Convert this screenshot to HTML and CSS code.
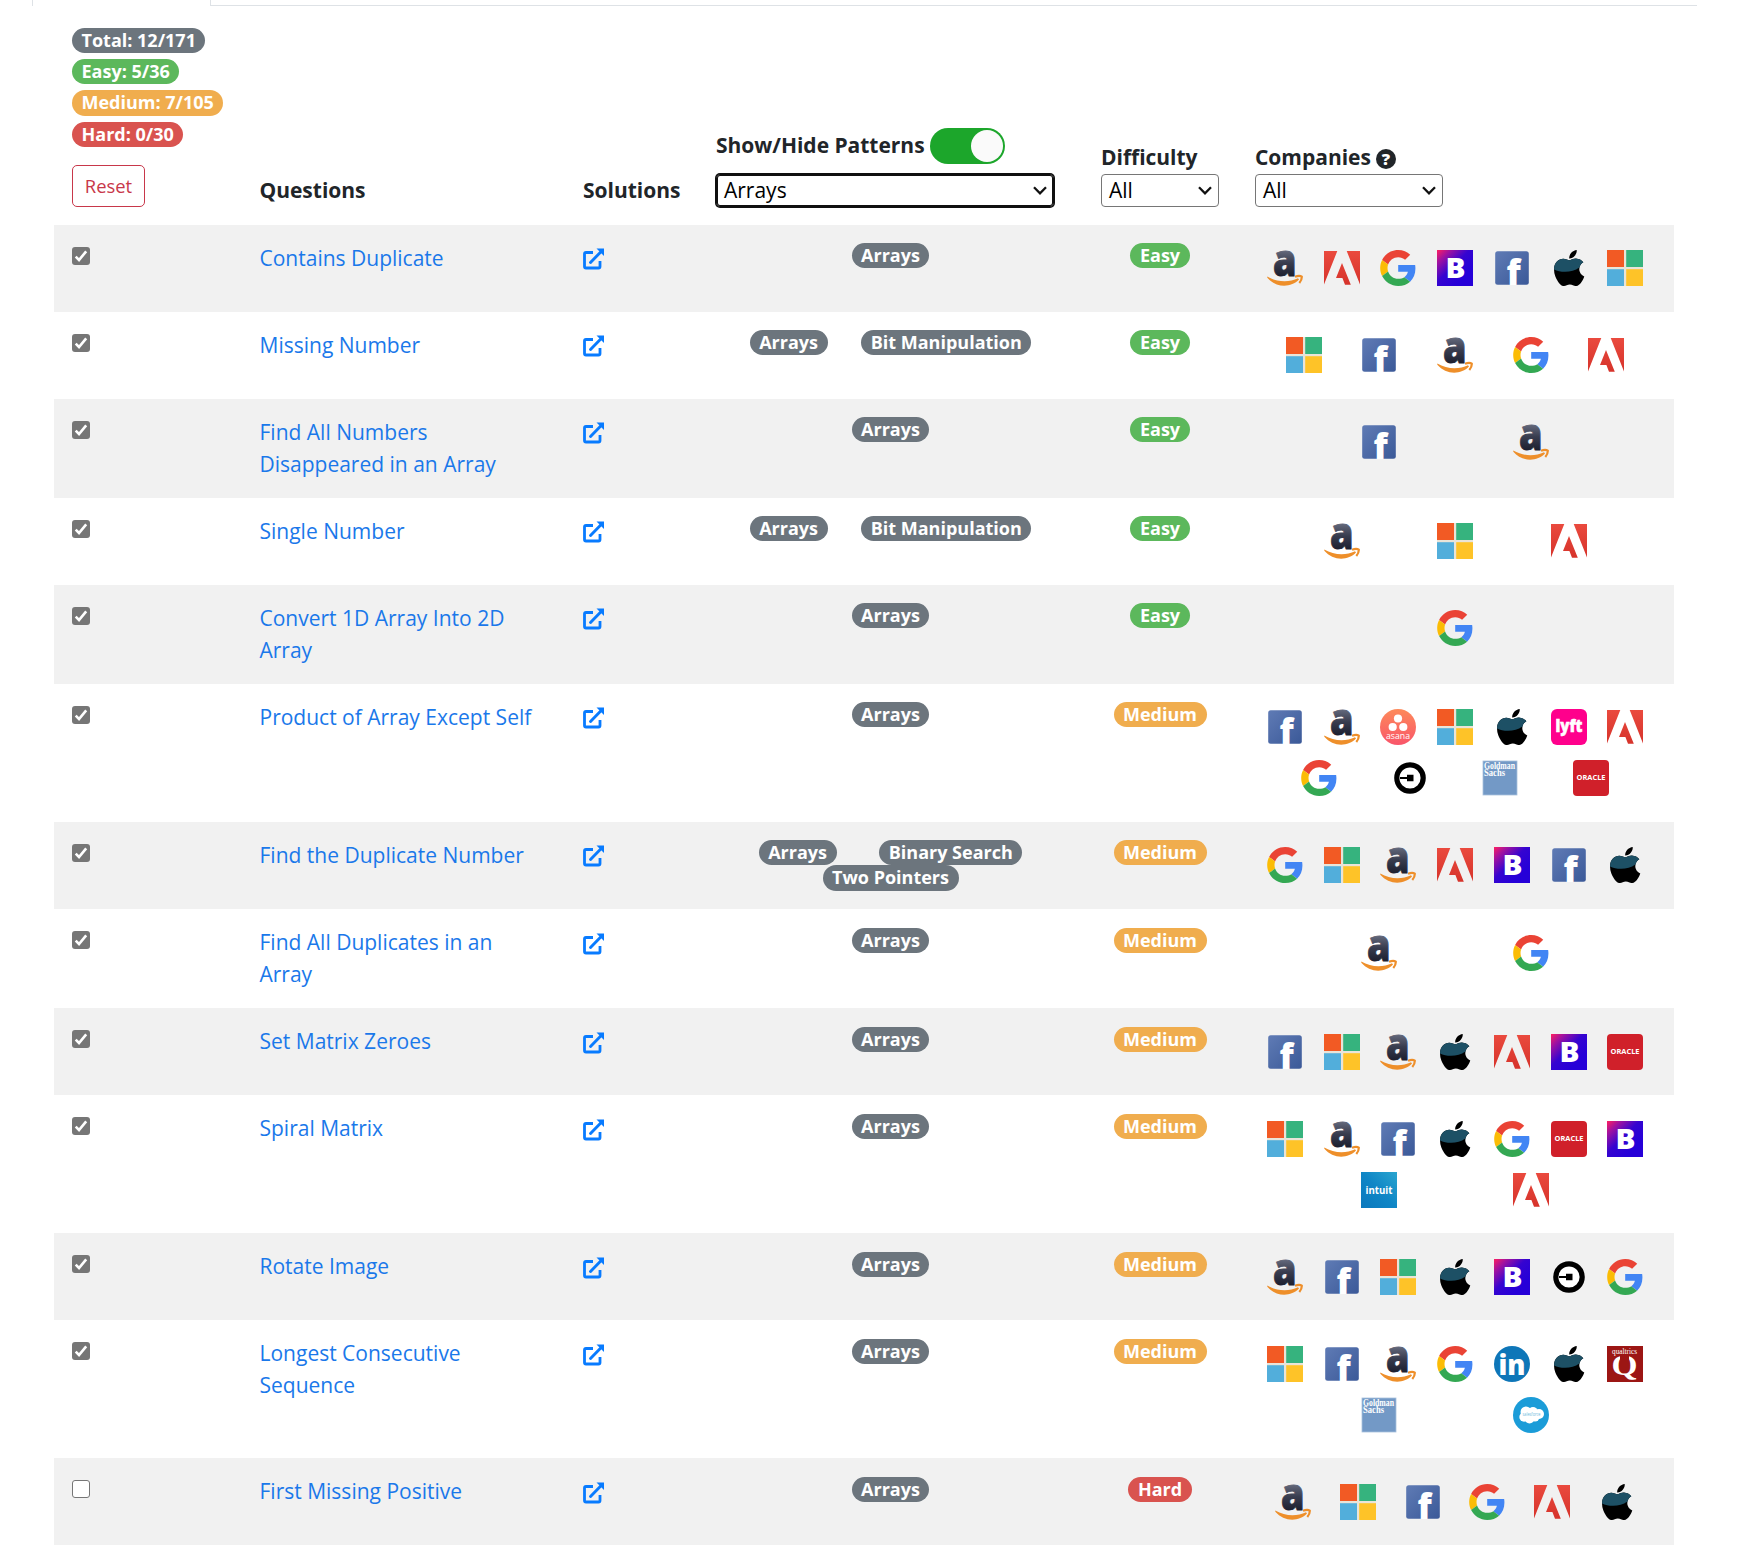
FILE: index.html
```html
<!DOCTYPE html>
<html lang="en">
<head>
<meta charset="utf-8">
<title>Questions</title>
<link rel="stylesheet" href="styles.css">
</head>
<body>
<svg class="gradients" aria-hidden="true">
<defs>
<linearGradient id="g-boot" x1="0" y1="0" x2="0.75" y2="0.75"><stop offset="0" stop-color="#ff1f5f"/><stop offset=".25" stop-color="#a012a0"/><stop offset=".6" stop-color="#3504d0"/><stop offset="1" stop-color="#2600d8"/></linearGradient>
<linearGradient id="g-asana" x1="0" y1="0" x2="0" y2="1"><stop offset="0" stop-color="#fd8a5a"/><stop offset="1" stop-color="#f9556a"/></linearGradient>
<linearGradient id="g-intuit" x1="1" y1="0" x2="0" y2="1"><stop offset="0" stop-color="#2aa5cf"/><stop offset=".5" stop-color="#0f86c6"/><stop offset="1" stop-color="#0b78bd"/></linearGradient>
<linearGradient id="g-fb" x1="0" y1="0" x2="1" y2="1"><stop offset="0" stop-color="#5f7bb5"/><stop offset="1" stop-color="#3b5998"/></linearGradient>
<linearGradient id="g-ama" gradientUnits="userSpaceOnUse" x1="0" y1="0" x2="0" y2="26"><stop offset="0" stop-color="#666b7e"/><stop offset=".5" stop-color="#383c4e"/><stop offset="1" stop-color="#1d2030"/></linearGradient>
<linearGradient id="g-adobe" x1="0" y1="0" x2="0" y2="1"><stop offset="0" stop-color="#ea4a3e"/><stop offset="1" stop-color="#d6332b"/></linearGradient>
</defs>
</svg>
<svg class="sprite" aria-hidden="true">
<symbol id="amazon" viewBox="0 0 36 36"><text x="6" y="25.500" font-family="Open Sans" font-weight="800" font-size="45" textLength="23.500" lengthAdjust="spacingAndGlyphs" fill="url(#g-ama)" stroke="url(#g-ama)" stroke-width=".9">a</text><path d="M.3 26.500C10 32.300 22 32.500 31 28.300L32 29.500C24 38 9 38 .3 27.800Z" fill="#ee8f2a"/><path d="M28 26.700Q32.500 25 34.800 26.600Q35 30 32.300 33" fill="none" stroke="#ee8f2a" stroke-width="2.200" stroke-linejoin="round"/></symbol>
<symbol id="adobe" viewBox="0 0 36 36"><path fill="url(#g-adobe)" d="M0 1H13.300L0 34.500ZM22.700 1H36V34.500ZM18 13L26.800 34.800H21L18.400 28H12Z"/></symbol>
<symbol id="google" viewBox="0 0 47.500 48"><path fill="#EA4335" d="M24 9.500c3.540 0 6.710 1.220 9.210 3.600l6.850-6.850C35.900 2.380 30.470 0 24 0 14.620 0 6.510 5.380 2.560 13.220l7.980 6.190C12.430 13.720 17.740 9.500 24 9.500z"/><path fill="#4285F4" d="M46.980 24.550c0-1.570-.15-3.090-.38-4.550H24v9.020h12.940c-.58 2.960-2.260 5.480-4.780 7.180l7.730 6c4.510-4.180 7.090-10.360 7.090-17.650z"/><path fill="#FBBC05" d="M10.530 28.590c-.48-1.450-.76-2.990-.76-4.590s.27-3.140.76-4.590l-7.980-6.190C.92 16.460 0 20.120 0 24c0 3.880.92 7.540 2.560 10.780l7.970-6.190z"/><path fill="#34A853" d="M24 48c6.480 0 11.930-2.130 15.890-5.810l-7.730-6c-2.150 1.450-4.920 2.300-8.160 2.300-6.260 0-11.570-4.220-13.470-9.910l-7.980 6.190C6.510 42.620 14.620 48 24 48z"/></symbol>
<symbol id="boot" viewBox="0 0 36 36"><rect width="36" height="36" fill="url(#g-boot)"/><text x="18.500" y="27.800" text-anchor="middle" font-family="Open Sans" font-weight="800" font-size="28" textLength="20" lengthAdjust="spacingAndGlyphs" fill="#fff">B</text></symbol>
<symbol id="facebook" viewBox="0 0 36 36"><rect x="1.200" y="1.200" width="33.600" height="33.600" rx="2.500" fill="url(#g-fb)"/><text x="12.500" y="35" font-family="Open Sans" font-weight="800" font-size="34.500" fill="#fff">f</text></symbol>
<symbol id="apple" viewBox="0 0 36 36"><g transform="translate(2.700 -2.570) scale(.0804)"><path d="M318.700 268.700c-.2-36.700 16.400-64.400 50-84.800-18.800-26.900-47.200-41.700-84.700-44.600-35.500-2.800-74.300 20.700-88.500 20.700-15 0-49.400-19.700-76.400-19.700C63.300 141.200 4 184.800 4 273.500q0 39.300 14.400 81.200c12.800 36.700 59 126.700 107.200 125.200 25.200-.6 43-17.900 75.800-17.900 31.800 0 48.300 17.900 76.400 17.900 48.600-.7 90.400-82.500 102.600-119.300-65.200-30.700-61.700-90-61.700-91.900zm-56.600-164.200c27.300-32.400 24.800-61.900 24-72.500-24.100 1.400-52 16.400-67.900 34.900-17.500 19.800-27.800 44.300-25.600 71.900 26.100 2 49.900-11.400 69.500-34.300z"/><path fill="#1d5065" d="M318.700 268.700c-.2-36.700 16.400-64.400 50-84.800-18.800-26.900-47.200-41.700-84.700-44.600-35.500-2.800-74.300 20.700-88.500 20.700-15 0-49.400-19.700-76.400-19.700C63.300 141.200 4 184.800 4 273.500C80 315 230 320 318.700 250z"/></g></symbol>
<symbol id="microsoft" viewBox="0 0 36 36"><path fill="#e9e4d8" d="M0 0H36V36H0Z"/><path fill="#f25a24" d="M0 0H17V17H0Z"/><path fill="#36b37e" d="M19.200 0H36V17H19.200Z"/><path fill="#52aedb" d="M0 19.200H17V36H0Z"/><path fill="#fec328" d="M19.200 19.200H36V36H19.200Z"/></symbol>
<symbol id="asana" viewBox="0 0 36 36"><circle cx="18" cy="18" r="18" fill="url(#g-asana)"/><g fill="#fff"><circle cx="18" cy="9.500" r="4.100"/><circle cx="12.700" cy="18" r="4.100"/><circle cx="23.300" cy="18" r="4.100"/><text x="18" y="29.500" text-anchor="middle" font-family="Open Sans" font-size="9" textLength="24" lengthAdjust="spacingAndGlyphs">asana</text></g></symbol>
<symbol id="lyft" viewBox="0 0 36 36"><rect width="36" height="36" rx="6" fill="#ff008c"/><text x="18" y="22.500" text-anchor="middle" font-family="Open Sans" font-weight="800" font-size="18" textLength="27" lengthAdjust="spacingAndGlyphs" fill="#fff" stroke="#fff" stroke-width=".6">lyft</text></symbol>
<symbol id="uber" viewBox="0 0 36 36"><circle cx="18" cy="18" r="13.200" fill="#fff" stroke="#000" stroke-width="5.200"/><path d="M8 17.100H15V14.700H21.500V21.300H15V18.900H8Z"/></symbol>
<symbol id="goldman" viewBox="0 0 36 36"><rect x="1" y="1" width="34" height="34" fill="#7399c6" stroke="#a9c1dd" stroke-width=".8"/><g font-family="Liberation Serif" font-weight="700" font-size="9.500" fill="#fff"><text x="2" y="9" textLength="31" lengthAdjust="spacingAndGlyphs">Goldman</text><text x="2" y="15.600" textLength="21" lengthAdjust="spacingAndGlyphs">Sachs</text></g></symbol>
<symbol id="oracle" viewBox="0 0 36 36"><rect width="36" height="36" rx="4" fill="#d0202a"/><text x="18" y="19.800" text-anchor="middle" font-family="Open Sans" font-weight="700" font-size="7" textLength="29" lengthAdjust="spacingAndGlyphs" fill="#fff">ORACLE</text></symbol>
<symbol id="intuit" viewBox="0 0 36 36"><rect width="36" height="36" fill="url(#g-intuit)"/><text x="18" y="21.500" text-anchor="middle" font-family="Open Sans" font-weight="700" font-size="10" textLength="27" lengthAdjust="spacingAndGlyphs" fill="#fff">intuit</text></symbol>
<symbol id="linkedin" viewBox="0 0 36 36"><circle cx="18" cy="18" r="18" fill="#0e76b8"/><text x="18" y="29" text-anchor="middle" font-family="Open Sans" font-weight="800" font-size="28" textLength="27" lengthAdjust="spacingAndGlyphs" fill="#fff">in</text></symbol>
<symbol id="qualtrics" viewBox="0 0 36 36"><rect width="36" height="36" fill="#9c1614"/><g fill="#fff" text-anchor="middle"><text x="17.500" y="7.500" font-family="Liberation Serif" font-size="8.500" textLength="25" lengthAdjust="spacingAndGlyphs">qualtrics</text><text x="17.500" y="28.500" font-family="Liberation Serif" font-weight="700" font-size="29" textLength="26" lengthAdjust="spacingAndGlyphs">Q</text></g><path fill="#9c1614" d="M13 8.300H22V14H13Z"/></symbol>
<symbol id="salesforce" viewBox="0 0 36 36"><circle cx="18" cy="18" r="18" fill="#1b9cd8"/><g fill="#fff"><circle cx="13" cy="15" r="5.500"/><circle cx="20" cy="14.500" r="4.600"/><circle cx="26" cy="17" r="5"/><circle cx="11" cy="20" r="4.700"/><circle cx="16.500" cy="21.500" r="5"/><circle cx="22" cy="20" r="4.500"/></g><text x="18.500" y="19.300" text-anchor="middle" font-family="Open Sans" font-size="4.500" textLength="18" lengthAdjust="spacingAndGlyphs" fill="#6bb9dd">salesforce</text></symbol>
<symbol id="ext" viewBox="0 0 21 22"><path d="M10 4.500H3Q1.500 4.500 1.500 6V18.500Q1.500 20 3 20H15.500Q17 20 17 18.500V13" fill="none" stroke="currentColor" stroke-width="2.800"/><path d="M7.500 14.500L17.500 4.200" stroke="currentColor" stroke-width="2.900" stroke-linecap="round"/><path d="M13.500 .5H21V8Z" fill="currentColor"/></symbol>
<symbol id="tick" viewBox="0 0 18 18"><path d="M3.700 9.700L7 13L14.200 4.300" fill="none" stroke="#fff" stroke-width="2.600"/></symbol>
<symbol id="chev" viewBox="0 0 14 9"><path d="M1 1.300L7 7.300L13 1.300" fill="none" stroke="#111" stroke-width="2.300"/></symbol>
</svg>

<div class="tabs"><div class="tab-active"></div><div class="tab-line"></div></div>

<table class="questions">
<colgroup><col class="c1"><col class="c2"><col class="c3"><col class="c4"><col class="c5"><col class="c6"></colgroup>
<thead><tr>
<th><div class="totals"><span class="badge gray">Total: 12/171</span><span class="badge green">Easy: 5/36</span><span class="badge orange">Medium: 7/105</span><span class="badge red">Hard: 0/30</span></div><button class="reset">Reset</button></th>
<th><div class="label">Questions</div></th>
<th><div class="label">Solutions</div></th>
<th><div class="toggle-row">Show/Hide Patterns<span class="switch"><span class="thumb"></span></span></div><div class="select wide focused">Arrays<svg><use href="#chev"/></svg></div></th>
<th><div class="label">Difficulty</div><div class="select small">All<svg><use href="#chev"/></svg></div></th>
<th><div class="label company-head">Companies<span class="help">?</span></div><div class="select mid">All<svg><use href="#chev"/></svg></div></th>
</tr></thead>
<tbody>
<tr><td><span class="check on"><svg><use href="#tick"/></svg></span></td><td><a>Contains Duplicate</a></td><td><svg class="ext"><use href="#ext"/></svg></td><td><div class="tags"><span class="badge gray">Arrays</span></div></td><td><div class="tags"><span class="badge green">Easy</span></div></td>
<td><div class="logos"><svg><use href="#amazon"/></svg><svg><use href="#adobe"/></svg><svg><use href="#google"/></svg><svg><use href="#boot"/></svg><svg><use href="#facebook"/></svg><svg><use href="#apple"/></svg><svg><use href="#microsoft"/></svg></div></td></tr>
<tr><td><span class="check on"><svg><use href="#tick"/></svg></span></td><td><a>Missing Number</a></td><td><svg class="ext"><use href="#ext"/></svg></td><td><div class="tags"><span class="badge gray">Arrays</span><span class="badge gray">Bit Manipulation</span></div></td><td><div class="tags"><span class="badge green">Easy</span></div></td>
<td><div class="logos"><svg><use href="#microsoft"/></svg><svg><use href="#facebook"/></svg><svg><use href="#amazon"/></svg><svg><use href="#google"/></svg><svg><use href="#adobe"/></svg></div></td></tr>
<tr><td><span class="check on"><svg><use href="#tick"/></svg></span></td><td><a>Find All Numbers Disappeared in an Array</a></td><td><svg class="ext"><use href="#ext"/></svg></td><td><div class="tags"><span class="badge gray">Arrays</span></div></td><td><div class="tags"><span class="badge green">Easy</span></div></td>
<td><div class="logos"><svg><use href="#facebook"/></svg><svg><use href="#amazon"/></svg></div></td></tr>
<tr><td><span class="check on"><svg><use href="#tick"/></svg></span></td><td><a>Single Number</a></td><td><svg class="ext"><use href="#ext"/></svg></td><td><div class="tags"><span class="badge gray">Arrays</span><span class="badge gray">Bit Manipulation</span></div></td><td><div class="tags"><span class="badge green">Easy</span></div></td>
<td><div class="logos"><svg><use href="#amazon"/></svg><svg><use href="#microsoft"/></svg><svg><use href="#adobe"/></svg></div></td></tr>
<tr><td><span class="check on"><svg><use href="#tick"/></svg></span></td><td><a>Convert 1D Array Into 2D Array</a></td><td><svg class="ext"><use href="#ext"/></svg></td><td><div class="tags"><span class="badge gray">Arrays</span></div></td><td><div class="tags"><span class="badge green">Easy</span></div></td>
<td><div class="logos"><svg><use href="#google"/></svg></div></td></tr>
<tr><td><span class="check on"><svg><use href="#tick"/></svg></span></td><td><a>Product of Array Except Self</a></td><td><svg class="ext"><use href="#ext"/></svg></td><td><div class="tags"><span class="badge gray">Arrays</span></div></td><td><div class="tags"><span class="badge orange">Medium</span></div></td>
<td><div class="logos"><svg><use href="#facebook"/></svg><svg><use href="#amazon"/></svg><svg><use href="#asana"/></svg><svg><use href="#microsoft"/></svg><svg><use href="#apple"/></svg><svg><use href="#lyft"/></svg><svg><use href="#adobe"/></svg><svg><use href="#google"/></svg><svg><use href="#uber"/></svg><svg><use href="#goldman"/></svg><svg><use href="#oracle"/></svg></div></td></tr>
<tr><td><span class="check on"><svg><use href="#tick"/></svg></span></td><td><a>Find the Duplicate Number</a></td><td><svg class="ext"><use href="#ext"/></svg></td><td><div class="tags"><span class="badge gray">Arrays</span><span class="badge gray">Binary Search</span><span class="badge gray">Two Pointers</span></div></td><td><div class="tags"><span class="badge orange">Medium</span></div></td>
<td><div class="logos"><svg><use href="#google"/></svg><svg><use href="#microsoft"/></svg><svg><use href="#amazon"/></svg><svg><use href="#adobe"/></svg><svg><use href="#boot"/></svg><svg><use href="#facebook"/></svg><svg><use href="#apple"/></svg></div></td></tr>
<tr><td><span class="check on"><svg><use href="#tick"/></svg></span></td><td><a>Find All Duplicates in an Array</a></td><td><svg class="ext"><use href="#ext"/></svg></td><td><div class="tags"><span class="badge gray">Arrays</span></div></td><td><div class="tags"><span class="badge orange">Medium</span></div></td>
<td><div class="logos"><svg><use href="#amazon"/></svg><svg><use href="#google"/></svg></div></td></tr>
<tr><td><span class="check on"><svg><use href="#tick"/></svg></span></td><td><a>Set Matrix Zeroes</a></td><td><svg class="ext"><use href="#ext"/></svg></td><td><div class="tags"><span class="badge gray">Arrays</span></div></td><td><div class="tags"><span class="badge orange">Medium</span></div></td>
<td><div class="logos"><svg><use href="#facebook"/></svg><svg><use href="#microsoft"/></svg><svg><use href="#amazon"/></svg><svg><use href="#apple"/></svg><svg><use href="#adobe"/></svg><svg><use href="#boot"/></svg><svg><use href="#oracle"/></svg></div></td></tr>
<tr><td><span class="check on"><svg><use href="#tick"/></svg></span></td><td><a>Spiral Matrix</a></td><td><svg class="ext"><use href="#ext"/></svg></td><td><div class="tags"><span class="badge gray">Arrays</span></div></td><td><div class="tags"><span class="badge orange">Medium</span></div></td>
<td><div class="logos"><svg><use href="#microsoft"/></svg><svg><use href="#amazon"/></svg><svg><use href="#facebook"/></svg><svg><use href="#apple"/></svg><svg><use href="#google"/></svg><svg><use href="#oracle"/></svg><svg><use href="#boot"/></svg><svg><use href="#intuit"/></svg><svg><use href="#adobe"/></svg></div></td></tr>
<tr><td><span class="check on"><svg><use href="#tick"/></svg></span></td><td><a>Rotate Image</a></td><td><svg class="ext"><use href="#ext"/></svg></td><td><div class="tags"><span class="badge gray">Arrays</span></div></td><td><div class="tags"><span class="badge orange">Medium</span></div></td>
<td><div class="logos"><svg><use href="#amazon"/></svg><svg><use href="#facebook"/></svg><svg><use href="#microsoft"/></svg><svg><use href="#apple"/></svg><svg><use href="#boot"/></svg><svg><use href="#uber"/></svg><svg><use href="#google"/></svg></div></td></tr>
<tr><td><span class="check on"><svg><use href="#tick"/></svg></span></td><td><a>Longest Consecutive Sequence</a></td><td><svg class="ext"><use href="#ext"/></svg></td><td><div class="tags"><span class="badge gray">Arrays</span></div></td><td><div class="tags"><span class="badge orange">Medium</span></div></td>
<td><div class="logos"><svg><use href="#microsoft"/></svg><svg><use href="#facebook"/></svg><svg><use href="#amazon"/></svg><svg><use href="#google"/></svg><svg><use href="#linkedin"/></svg><svg><use href="#apple"/></svg><svg><use href="#qualtrics"/></svg><svg><use href="#goldman"/></svg><svg><use href="#salesforce"/></svg></div></td></tr>
<tr><td><span class="check"></span></td><td><a>First Missing Positive</a></td><td><svg class="ext"><use href="#ext"/></svg></td><td><div class="tags"><span class="badge gray">Arrays</span></div></td><td><div class="tags"><span class="badge red">Hard</span></div></td>
<td><div class="logos"><svg><use href="#amazon"/></svg><svg><use href="#microsoft"/></svg><svg><use href="#facebook"/></svg><svg><use href="#google"/></svg><svg><use href="#adobe"/></svg><svg><use href="#apple"/></svg></div></td></tr>
</tbody>
</table>
</body>
</html>
```
FILE: styles.css
```css
* { box-sizing: border-box; }
body {
  margin: 0;
  background: #fff;
  color: #212529;
  font: 400 21px/31.5px "Open Sans", "Noto Sans", sans-serif;
}
.gradients { display: block; width: 0; height: 0; }
.sprite { display: none; }

.tabs { display: flex; height: 6px; margin: 0 56px 0 32px; }
.tab-active { width: 179px; border: solid #dee2e6; border-width: 0 1px; }
.tab-line { flex: 1; border-bottom: 1px solid #dee2e6; }

.questions {
  width: 1620px;
  margin-left: 54px;
  table-layout: fixed;
  border-collapse: collapse;
}
.c1 { width: 187.5px; }
.c2 { width: 323.5px; }
.c3 { width: 133px; }
.c4 { width: 385px; }
.c5 { width: 154px; }
.c6 { width: 437px; }

th { height: 219px; padding: 18px; vertical-align: bottom; text-align: left; font-weight: 700; letter-spacing: -.02px; }
td { padding: 18px; vertical-align: top; }
tbody tr:nth-child(odd) { background: #f1f1f1; }
tbody tr:nth-child(n+8) td:nth-child(n+3) { padding-top: 19px; padding-bottom: 17px; }

.totals { display: flex; flex-direction: column; align-items: flex-start; gap: 6px; margin-bottom: 18px; letter-spacing: 0; }
.badge {
  height: 25.33px;
  padding: 0 9.5px;
  border-radius: 13px;
  color: #fff;
  font-size: 18px;
  font-weight: 700;
  line-height: 25.33px;
  white-space: nowrap;
}
.gray { background: #6c757d; }
.green { background: #5cb85c; }
.orange { background: #f0ad4e; }
.red { background: #d9534f; }

.reset {
  display: block;
  width: 73px;
  height: 42px;
  padding: 0;
  border: 1px solid #c8374a;
  border-radius: 5px;
  background: #fff;
  color: #c8374a;
  font: 400 18.4px/36px "Open Sans", sans-serif;
}

.label { margin-top: -1px; padding-bottom: 1px; }
.toggle-row { display: flex; align-items: center; gap: 5px; margin-bottom: 10px; }
.switch {
  display: flex;
  justify-content: flex-end;
  width: 75px;
  height: 36px;
  padding: 2px;
  border-radius: 18px;
  background: #1ca62b;
}
.thumb { width: 32px; height: 32px; border-radius: 50%; background: #fafafa; }

.select {
  display: flex;
  align-items: center;
  justify-content: space-between;
  height: 33px;
  padding: 0 6px 0 7px;
  border: 1px solid #767676;
  border-radius: 4px;
  background: #fff;
  color: #000;
  font-weight: 400;
  letter-spacing: 0;
}
.select svg { width: 14px; height: 9px; }
.focused { border-color: #101010; box-shadow: 0 0 0 1px #101010 inset, 0 0 0 1px #101010; }
.wide { width: 338px; }
.small { width: 118px; }
.mid { width: 188px; }
.company-head { display: flex; align-items: center; gap: 5px; }
.help {
  width: 20px;
  height: 20px;
  margin-top: 3px;
  border-radius: 50%;
  background: #212529;
  color: #fff;
  font-size: 16.5px;
  font-weight: 800;
  line-height: 20px;
  text-align: center;
}

.check {
  display: block;
  width: 18px;
  height: 18px;
  margin-top: 4px;
  border: 1.5px solid #767676;
  border-radius: 3px;
  background: #fff;
}
.on { border: 0; background: #767676; }
.check svg { display: block; width: 18px; height: 18px; }

a { color: #1a78ea; }
.ext { display: block; width: 21px; height: 22px; margin-top: 5px; color: #087bff; }

.tags { display: flex; flex-wrap: wrap; justify-content: space-evenly; }
.logos { display: flex; flex-wrap: wrap; justify-content: space-evenly; margin-right: 1px; }
.logos svg { width: 36px; height: 36px; margin: 7px 9px 8px; }
```
